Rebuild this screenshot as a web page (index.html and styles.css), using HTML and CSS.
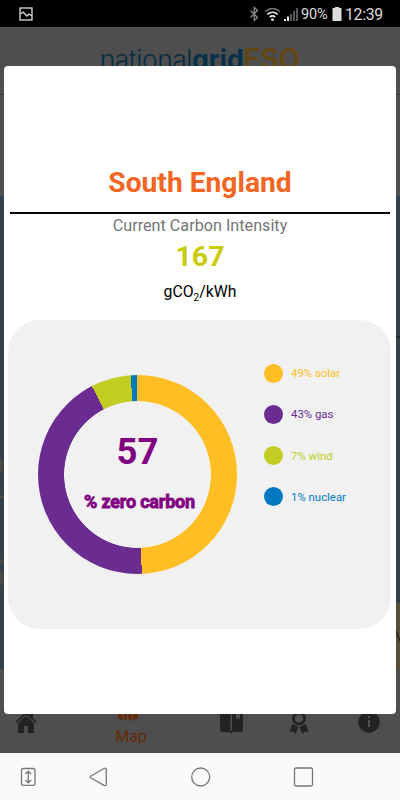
FILE: index.html
```html
<!DOCTYPE html>
<html lang="en">
<head>
  <meta charset="UTF-8">
  <meta name="viewport" content="width=device-width, initial-scale=1.0">
  <title>Carbon Intensity</title>
  <link rel="stylesheet" href="styles.css">
</head>
<body>
  <div class="phone">
    <header class="status">
      <svg width="14" height="14" viewBox="0 0 14 14" fill="none" stroke="#ddd" stroke-width="1.3">
        <rect x="1" y="1" width="12" height="12"/>
        <path d="M1.5 7 4 5l2 2 2 2 2-2 3 2"/>
      </svg>
      <div class="status-right">
        <svg width="50" height="16" viewBox="0 0 50 16" fill="none">
          <path d="m1.500 4.500 7 7-3.200 3v-13l3.200 3-7 7" stroke="#888" stroke-width="1.300"/>
          <path d="M16 5.500q7.500-6 15 0" stroke="#777" stroke-width="1.500"/>
          <path d="M18.300 8.300q5.200-4 10.400 0M20.700 11q2.800-2.200 5.600 0" stroke="#eee" stroke-width="1.600"/>
          <circle cx="23.500" cy="13.700" r="1.400" fill="#eee"/>
          <path d="M36 15v-2M39 15v-4.500" stroke="#eee" stroke-width="2"/>
          <path d="M42 15V8M45 15V5M48 15V2" stroke="#666" stroke-width="1.700"/>
        </svg>
        <span class="battery-text">90%</span>
        <svg width="10" height="14" viewBox="0 0 10 14"><path d="M3 0h4v1h2.500v13H.5V1H3z" fill="#ddd"/></svg>
        <span class="clock">12:39</span>
      </div>
    </header>

    <div class="brand"><span class="national">national</span><span class="grid">grid</span><span class="eso">ESO</span></div>
    <main class="map">
      <svg width="400" height="575" viewBox="0 0 400 575">
        <path d="M-2 362q6 8 2 14M-2 402h6M-2 465q5 3 8 0M-1 475q6 6 0 15" fill="none" stroke="#4d4a45" stroke-width="3"/>
        <path d="M396 508h4v66h-4z" fill="#584d36"/>
        <path d="M396 242h4M396 536l4 10" stroke="#222" stroke-width="1.500"/>
      </svg>
    </main>
    <nav class="tabs">
      <svg width="22" height="22" viewBox="0 0 22 22" fill="#222">
        <path d="M11 1 0 11l1.500 1L11 3.500l9.500 8.500 1.500-1-4-4V2h-3v2.500z"/>
        <path d="m11 5-8 7v10h6v-7h4v7h6V12z"/>
      </svg>
      <div class="tab-map">
        <svg width="20" height="17" viewBox="0 0 20 17" fill="#632b0b">
          <path d="M0 1 5 0v17l-5-3zM6 1l3-1v15l-3 2zM10 0l4 2v15l-4-2zM15 2l5-2v14l-5 3z"/>
        </svg>
        <span>Map</span>
      </div>
      <svg width="24" height="24" viewBox="0 0 24 24" fill="#222">
        <path d="M0 2h10.500v17.500H12V2h4v6l2-1 2 1V2h2q1 0 1 1v16q0 2-2 2h-8.500l-1.500 2-1.500-2H2q-2 0-2-2z"/>
      </svg>
      <svg width="20" height="24" viewBox="0 0 20 24" fill="#222">
        <circle cx="10" cy="7.500" r="5.500" fill="none" stroke="#222" stroke-width="2.800"/>
        <path d="m3.500 13 6 3-3 7-2-2.500-4 .5zM16.500 13l-6 3 3 7 2-2.500 4 .5z"/>
      </svg>
      <svg width="22" height="22" viewBox="0 0 22 22">
        <circle cx="11" cy="11" r="10.700" fill="#222"/>
        <path d="M11 9v7M11 5v2" stroke="#505050" stroke-width="2"/>
      </svg>
    </nav>
    <footer class="android-nav">
      <svg width="400" height="47" viewBox="0 0 400 47" fill="none" stroke="#777" stroke-width="1.300">
        <rect x="21.500" y="15.500" width="13.500" height="16.800" rx="2"/>
        <path d="M28.300 18.500v11M25.500 21l2.800-2.800 2.800 2.800M25.500 27l2.800 2.800 2.800-2.800"/>
        <path d="M91 23q-1.500 1 0 2l13 7.300q2.300 1 2.300-1V16.500q0-2-2.300-1z"/>
        <circle cx="200.700" cy="24" r="9"/>
        <rect x="294.500" y="15" width="18" height="18" rx="1.500"/>
      </svg>
    </footer>

    <section class="dialog">
      <h1>South England</h1>
      <p class="caption">Current Carbon Intensity</p>
      <p class="intensity">167</p>
      <p class="unit">gCO<sub>2</sub>/kWh</p>
      <div class="mix">
        <div class="chart">
          <div class="total">57</div>
          <div class="total-label">% zero carbon</div>
        </div>
        <ul class="legend">
          <li class="solar">49% solar</li>
          <li class="gas">43% gas</li>
          <li class="wind">7% wind</li>
          <li class="nuclear">1% nuclear</li>
        </ul>
      </div>
    </section>
  </div>
</body>
</html>
```
FILE: styles.css
```css
* {
  box-sizing: border-box;
}
body {
  margin: 0;
  font-family: Roboto, sans-serif;
}
svg {
  display: block;
  flex: none;
}
.phone {
  position: relative;
  display: flex;
  flex-direction: column;
  width: 400px;
  height: 800px;
  overflow: hidden;
  background: #4e4e4e;
}
.status {
  display: flex;
  justify-content: space-between;
  align-items: center;
  height: 27px;
  padding: 1px 17px 0 19px;
  background: #000;
  color: #ddd;
}
.status-right {
  display: flex;
  align-items: center;
}
.battery-text {
  width: 26px;
  margin: 1px 5px 0 2px;
  font-size: 14.5px;
  letter-spacing: -0.2px;
}
.clock {
  width: 38px;
  margin: 1px 0 0 3px;
  font-size: 15.8px;
  letter-spacing: -0.3px;
}
.brand {
  height: 68px;
  padding-top: 14px;
  border-bottom: 1px solid #353535;
  font: 26.5px/36px Inter, sans-serif;
  text-align: center;
  white-space: nowrap;
}
.national {
  color: #062c42;
  font-weight: 300;
  letter-spacing: -0.5px;
}
.grid {
  color: #06304a;
  font-weight: 700;
}
.eso {
  color: #654713;
  font-size: 28px;
  font-weight: 600;
}
.map {
  height: 575px;
  background: linear-gradient(#4e4e4e 101px, #35424d 101px 574px, #4e4e4e 574px);
}
.tabs {
  display: grid;
  grid-template-columns: 100px 105px 69px 69px 22px;
  align-items: start;
  height: 83px;
  padding: 41px 20px 0 15px;
}
.tab-map {
  display: flex;
  flex-direction: column;
  align-items: center;
  gap: 5px;
  width: 32px;
  margin-top: -7px;
  color: #632b0b;
  font-size: 16px;
  line-height: 21px;
}
.tab-map svg {
  margin-right: 6px;
}
.android-nav {
  height: 47px;
  background: #fafafa;
}
/* dialog covers the map screen */
.dialog {
  position: absolute;
  top: 66px;
  left: 4px;
  width: 392px;
  height: 648px;
  padding: 98px 5px 0 4px;
  border-radius: 4px;
  background: #fff;
  text-align: center;
}
h1 {
  height: 50px;
  margin: 0 1px 0 2px;
  border-bottom: 2px solid #000;
  color: #f26522;
  font-size: 28.2px;
  line-height: 38px;
}
p {
  margin: 0;
}
.caption {
  padding-left: 1px;
  color: #757575;
  font-size: 16.2px;
  line-height: 24px;
}
.intensity {
  padding-left: 1px;
  color: #c8cc06;
  font-size: 28.5px;
  font-weight: 700;
  line-height: 37px;
}
.unit {
  height: 45px;
  padding: 7px 0 0 1px;
  font-size: 15.8px;
  line-height: 20px;
}
.unit sub {
  font-size: 10px;
  line-height: 0;
}
.mix {
  display: flex;
  gap: 27px;
  height: 309px;
  padding: 43px 0 0 30px;
  border-radius: 32px;
  background: #f1f1f1;
}
.chart {
  width: 199px;
  height: 199px;
  margin-top: 12px;
  padding-top: 55px;
  border-radius: 50%;
  background:
    radial-gradient(circle, #f1f1f1 73px, transparent 73.7px),
    conic-gradient(#ffbf24 0 49.3%, #6a2c91 49.3% 92.4%, #c1cd23 92.4% 98.9%, #0079c1 98.9%);
  color: purple;
  font-weight: 700;
}
.total {
  font-size: 36.5px;
  line-height: 43px;
}
.total-label {
  margin-top: 18px;
  padding-left: 4px;
  font-size: 18px;
  line-height: 22px;
  letter-spacing: -0.2px;
  white-space: nowrap;
  -webkit-text-stroke: 0.8px purple;
}
.legend {
  display: flex;
  flex-direction: column;
  gap: 21.3px;
  margin: 0;
  padding: 0;
  list-style: none;
  font-size: 11.4px;
}
.legend li {
  display: flex;
  align-items: center;
  gap: 8px;
  height: 20px;
}
.legend li::before {
  content: "";
  width: 19px;
  height: 19px;
  border-radius: 50%;
  background: currentColor;
}
.solar {
  color: #ffbf24;
}
.gas {
  color: #6a2c91;
}
.wind {
  color: #c1cd23;
}
.nuclear {
  color: #0079c1;
}
```
